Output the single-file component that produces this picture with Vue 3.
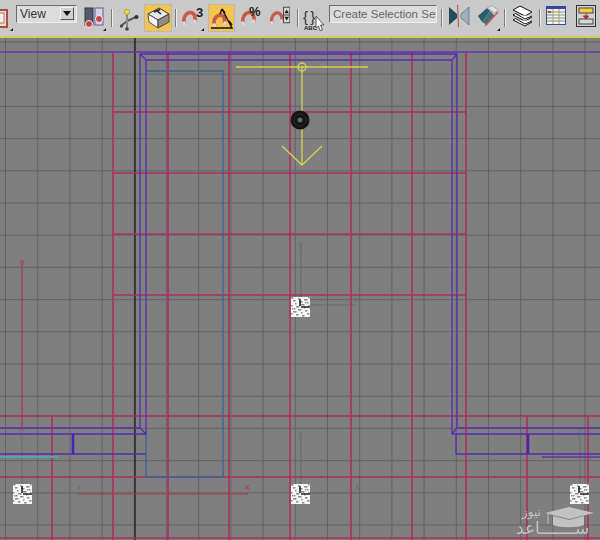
<template>
  <div class="app">
    <div class="toolbar">
      <!-- cut off icon at the left edge -->
      <svg class="ico stub" width="8" height="28" viewBox="0 0 8 28">
        <rect x="-4" y="6" width="11" height="17" fill="#e8e0dc" stroke="#a8503c" stroke-width="2" />
        <rect x="-4" y="9" width="8" height="10" fill="#f4f2ee" stroke="#c06a58" />
      </svg>

      <div class="combo view">
        <span>View</span>
        <i class="arrow"></i>
      </div>
      <i class="corner c-view"></i>

      <svg class="ico pair" width="22" height="28" viewBox="0 0 22 28">
        <rect x="2" y="4" width="8" height="17" fill="#55596a" stroke="#33364a" />
        <circle cx="6" cy="20" r="3.5" fill="#c8404a" stroke="#efefef" />
        <rect x="12" y="4" width="8" height="17" fill="#cfd3e4" stroke="#5a6490" />
        <circle cx="16" cy="15" r="3.5" fill="#c8404a" stroke="#efefef" />
      </svg>
      <i class="corner c-pair"></i>
      <i class="sep s1"></i>

      <svg class="ico axis" width="20" height="28" viewBox="0 0 20 28">
        <path d="M7 11V24M7 17L16 13M7 17L1 22" stroke="#5a5a5a" stroke-width="2" fill="none" />
        <path d="M7 11V24" stroke="#e8e8e8" stroke-width="0.7" />
        <circle cx="7" cy="8" r="2.6" fill="#e8dc40" stroke="#8a8420" stroke-width="0.6" />
        <circle cx="16.5" cy="13" r="2" fill="#333" />
        <circle cx="1.5" cy="22" r="1.6" fill="#444" />
        <circle cx="7" cy="25" r="1.8" fill="#444" />
      </svg>

      <div class="toggle box-btn">
        <svg width="24" height="24" viewBox="0 0 24 24">
          <path d="M2 8L13 2L23 8L12 14Z" fill="#e6e6e6" stroke="#333" />
          <path d="M2 8L12 14V22L3 16Z" fill="#f4f4f4" stroke="#555" />
          <path d="M12 14L23 8V16L12 22Z" fill="#8d8d8d" stroke="#444" />
          <path d="M8 6L14 3.6M11 4.8L15 8" stroke="#222" stroke-width="1.6" fill="none" />
        </svg>
      </div>
      <i class="sep s2"></i>

      <div class="snap m3">
        <svg width="16" height="18" viewBox="0 0 16 18">
          <path class="mag" d="M3.5 15C1 8 6 3 10 3.5C13 4 15 8 13.5 12.5" />
          <path class="mag-tip" d="M2.4 12.5L3.8 16.2M12 11.6L14.8 12.8" />
        </svg>
        <b class="three">3</b>
      </div>
      <i class="corner c-snap"></i>

      <div class="toggle ang-btn">
        <svg width="25" height="24" viewBox="0 0 25 24">
          <path class="mag" d="M6 20C3 13 8 9 12 9C15 10 17 13 15 18" />
          <path class="mag-tip" d="M4.6 17.5L6 21M14.5 16.5L17 18" />
          <path d="M2 22H23L13 3" fill="none" stroke="#111" stroke-width="1.4" />
          <path d="M13 3L11 8M13 3L16 7M20 15L23 19" stroke="#111" stroke-width="1.4" fill="none" />
        </svg>
      </div>

      <div class="snap mp">
        <svg width="16" height="18" viewBox="0 0 16 18">
          <path class="mag" d="M3.5 15C1 8 6 3 10 3.5C13 4 15 8 13.5 12.5" />
          <path class="mag-tip" d="M2.4 12.5L3.8 16.2M12 11.6L14.8 12.8" />
        </svg>
        <b class="pct">%</b>
      </div>

      <div class="snap ms">
        <svg width="16" height="18" viewBox="0 0 16 18">
          <path class="mag" d="M3.5 15C1 8 6 3 10 3.5C13 4 15 8 13.5 12.5" />
          <path class="mag-tip" d="M2.4 12.5L3.8 16.2M12 11.6L14.8 12.8" />
        </svg>
        <svg class="spin" width="8" height="18" viewBox="0 0 8 18">
          <rect x="0.5" y="0.5" width="7" height="17" fill="#d4d4d4" stroke="#444" />
          <path d="M4 3L1.5 7H6.5ZM4 15L1.5 11H6.5Z" fill="#222" />
          <path d="M0 9H8" stroke="#444" />
        </svg>
      </div>
      <i class="sep s3"></i>

      <div class="named">
        <span class="brace">{ }</span>
        <span class="abc">ABC</span>
        <svg class="cursor" width="10" height="16" viewBox="0 0 10 16">
          <path d="M1 1L9 10H5.5L7.5 15L5 15.5L3.5 11L1 13Z" fill="#fff" stroke="#555" />
        </svg>
      </div>

      <div class="combo sets">
        <span>Create Selection Set</span>
        <i class="arrow"></i>
      </div>
      <i class="sep s4"></i>

      <svg class="ico mirror" width="22" height="22" viewBox="0 0 22 22">
        <path d="M1 2L9 9V13L1 20Z" fill="#234a5c" />
        <path d="M21 2L13 9V13L21 20Z" fill="#9fb0bc" stroke="#4a6070" stroke-width="0.6" />
        <path d="M9.5 0L10.5 22" stroke="#c86058" stroke-width="1.2" />
      </svg>

      <svg class="ico align" width="22" height="24" viewBox="0 0 22 24">
        <path d="M1 11L10 3L13 6L5 17Z" fill="#2c5c6c" />
        <path d="M5 17L13 6L18 11L10 20Z" fill="#40707e" />
        <path d="M10 3L15 0.6L21 5L18 8Z" fill="#e0e0e0" stroke="#888" stroke-width="0.6" />
        <path d="M8 21L21 7" stroke="#c85a50" stroke-width="1.4" />
      </svg>
      <i class="corner c-align"></i>
      <i class="sep s5"></i>

      <svg class="ico layers" width="21" height="22" viewBox="0 0 21 22">
        <path d="M1 5L8 1L20 7L13 11Z" fill="#fff" stroke="#111" />
        <path d="M1 10L3.5 8.5L13 14L20 11M1 10L13 16L20 12" fill="#fff" stroke="#111" />
        <path d="M1 15L13 21L20 17M1 15L3.5 13.5L13 19L20 16" fill="#fff" stroke="#111" />
      </svg>
      <i class="sep s6"></i>

      <svg class="ico table" width="20" height="20" viewBox="0 0 20 20">
        <rect x="0.5" y="0.5" width="19" height="18" fill="#f2f2ee" stroke="#3a4a90" />
        <rect x="0" y="0" width="20" height="3" fill="#3444a0" />
        <path d="M1 6H19M1 9H19M1 12H19M1 15H19" stroke="#7f9a70" />
        <path d="M7 3V18M13 3V18" stroke="#b09a60" />
        <rect x="2" y="5" width="3" height="2" fill="#c04040" />
      </svg>

      <svg class="ico schematic" width="20" height="22" viewBox="0 0 20 22">
        <rect x="0.5" y="0.5" width="19" height="21" fill="#d0d0d0" stroke="#333" />
        <rect x="3" y="3" width="14" height="5" fill="#f0d040" stroke="#444" />
        <rect x="3" y="14" width="14" height="5" fill="#d8d8d8" stroke="#444" />
        <path d="M10 8V13M7.5 11L10 14L12.5 11Z" stroke="#b02828" fill="#b02828" />
      </svg>
    </div>
    <div class="accent"></div>

    <svg class="view-canvas" width="600" height="502" viewBox="0 38 600 502">
      <rect x="0" y="38" width="600" height="502" fill="#7f7f7f" />

      <!-- home grid -->
      <path v-for="x in gridX" :key="'gx' + x" :d="`M${x} 38V540`" class="grid" />
      <path v-for="y in gridY" :key="'gy' + y" :d="`M0 ${y}H600`" class="grid" />
      <path d="M135 38V540" class="world" />

      <!-- axes of the three lower pivots and the centre one -->
      <path d="M301 245V305H356M301 436V493H356M22 436V493H78M580 436V493" class="faint" />
      <text x="298" y="247" class="faint-t">y</text>
      <text x="298" y="436" class="faint-t">y</text>
      <text x="354" y="302" class="faint-t">x</text>
      <text x="355" y="490" class="faint-t">x</text>
      <text x="77" y="490" class="faint-t">x</text>
      <text x="577" y="434" class="faint-t">y</text>
      <text x="19" y="434" class="faint-t">y</text>

      <!-- walls -->
      <path v-for="l in redLines" :key="l" :d="l" class="red" />
      <path d="M22 268V430M78 494H248" class="axis-red" />
      <text x="20" y="265" class="red-t">y</text>
      <text x="245" y="490" class="red-t">x</text>

      <path d="M0 52H600" class="purple thick" />
      <path d="M146 71H223V477H146V434" class="blue" />
      <path
        d="M0 428H140V54H457V428H600M0 434H146V60H452V434H600M140 54L146 60M457 54L452 60M140 428L146 434M457 428L452 434M0 454H146M456 434V454H600"
        class="purple"
      />
      <path d="M73 434V454M528 434V454" class="purple bar" />
      <path d="M0 457H58" class="teal" />
      <path d="M542 457H600" class="purple thick" />

      <!-- target camera -->
      <path d="M236 67H368M302 67V165M282 146L302 165L322 146" class="yellow" />
      <circle cx="302" cy="67" r="4" class="yellow" />
      <circle cx="300" cy="120" r="9.5" fill="#141414" />
      <circle cx="300" cy="120" r="6" fill="none" stroke="#444" stroke-dasharray="1 1" />
      <circle cx="300" cy="120" r="2.5" fill="#6a6a52" />

      <!-- pivots -->
      <g v-for="p in pivots" :key="p.x + '-' + p.y">
        <rect :x="p.x" :y="p.y" width="19" height="20" fill="#f6f6f6" />
        <rect v-for="d in specks" :key="d.k" :x="p.x + d.x" :y="p.y + d.y" width="1.5" height="1.5" fill="#8d8d8d" />
        <path :d="`M${p.x + 9} ${p.y + 2}V${p.y + 9}M${p.x + 10} ${p.y + 10}H${p.x + 19}`" stroke="#222" stroke-width="1.6" />
      </g>

      <!-- watermark -->
      <g class="mark">
        <path d="M545 513L569 507L594 513L569 519Z" />
        <path d="M553 516V525C560 528 577 528 584 525V516L569 520Z" />
        <path d="M548 514V524" stroke="#c2c2c2" stroke-width="1" />
        <text x="522" y="516" class="mark-small">نیوز</text>
        <text x="516" y="534" class="mark-big">ســـــــاعد</text>
      </g>
    </svg>
  </div>
</template>

<script setup>
const gridX = []
for (let k = 0; k < 19; k++) gridX.push(+(5.5 + 32.2 * k).toFixed(1))

const gridY = []
for (let k = 0; k < 16; k++) gridY.push(+(525 - 32.2 * k).toFixed(1))

const redLines = [
  ...[113, 168, 229, 290, 351, 412, 466].map((x) => `M${x} 52V540`),
  ...[112, 173, 234, 295].map((y) => `M113 ${y}H466`),
  ...[416, 477, 538].map((y) => `M0 ${y}H600`),
  'M52 416V540',
  'M527 416V540',
  'M588 416V540',
]

const pivots = [
  { x: 291, y: 297 },
  { x: 13, y: 484 },
  { x: 291, y: 484 },
  { x: 570, y: 484 },
]

// fixed scatter so that the pivot icons look dithered
const specks = []
for (let i = 0; i < 42; i++) {
  specks.push({ k: i, x: (i * 7) % 18, y: (i * 11 + (i % 3)) % 19 })
}
</script>

<style>
html, body { margin: 0; background: #7f7f7f; }
</style>

<style scoped>
.app { width: 600px; height: 540px; overflow: hidden; font-family: "Liberation Sans", Arial, sans-serif; }
.toolbar { position: relative; display: flex; align-items: center; height: 36px; background: #c9c9c9; box-sizing: border-box; padding-bottom: 1px; }
.accent { height: 2px; background: #d8cc50; }
.view-canvas { display: block; filter: blur(0.35px); }

.ico { flex: none; }
.combo { flex: none; display: flex; align-items: center; justify-content: space-between; height: 18px; box-sizing: border-box; padding: 0 2px 0 3px; background: #dcdcdc; border: 1px solid; border-color: #6c6c6c #eeeeee #eeeeee #6c6c6c; margin-bottom: 8px; font-size: 12px; color: #333; }
.view { width: 61px; margin-left: 8px; }
.sets { width: 108px; margin-left: 3px; font-size: 11.5px; color: #666; white-space: nowrap; overflow: hidden; }
.arrow { flex: none; position: relative; width: 14px; height: 13px; background: #d2d2d2; border: 1px solid; border-color: #f4f4f4 #555 #555 #f4f4f4; box-sizing: border-box; }
.arrow::after { content: ""; position: absolute; left: 2px; top: 3px; border: 4px solid transparent; border-top: 5px solid #111; border-bottom: 0; }

.corner { position: absolute; top: 28px; width: 0; height: 0; border-left: 3px solid transparent; border-bottom: 3px solid #222; }
.c-view { left: 10px; }
.c-pair { left: 103px; }
.c-snap { left: 201px; }
.c-align { left: 497px; }

.sep { flex: none; width: 1px; height: 18px; background: #7c7c7c; border-right: 1px solid #ececec; }
.s1 { margin-left: 6px; }
.s2 { margin-left: 3px; }
.s3 { margin-left: 7px; }
.s4 { margin-left: 4px; }
.s5 { margin-left: 5px; }
.s6 { margin-left: 6px; }

.pair { margin-left: 6px; }
.axis { margin-left: 7px; }
.toggle { flex: none; display: flex; align-items: center; justify-content: center; height: 28px; background: #f4c44e; box-sizing: border-box; border: 1px solid #b8b8b8; }
.box-btn { width: 28px; margin-left: 4px; }
.ang-btn { width: 27px; margin-left: 1px; }

.snap { flex: none; position: relative; display: flex; align-items: center; height: 28px; }
.m3 { width: 26px; margin-left: 4px; }
.mp { width: 22px; margin-left: 5px; }
.ms { width: 21px; margin-left: 7px; gap: 0; }
.mag { fill: none; stroke: #c85a48; stroke-width: 3.6; }
.mag-tip { fill: none; stroke: #d8d8d8; stroke-width: 3.4; }
.three { position: absolute; left: 15px; top: 1px; font-size: 13px; color: #222; }
.pct { position: absolute; left: 9px; top: 0; font-size: 13px; color: #222; }
.spin { margin-left: -1px; margin-bottom: 6px; }

.named { flex: none; position: relative; width: 24px; height: 28px; margin-left: 3px; }
.brace { position: absolute; left: 1px; top: 4px; font-size: 15px; letter-spacing: -1px; color: #333; white-space: nowrap; }
.abc { position: absolute; left: 2px; top: 21px; font-size: 6px; font-weight: 700; color: #222; }
.cursor { position: absolute; left: 13px; top: 11px; }

.mirror { margin-left: 5px; margin-bottom: 4px; }
.align { margin-left: 7px; margin-bottom: 2px; }
.layers { margin-left: 6px; margin-bottom: 3px; }
.table { margin-left: 5px; margin-bottom: 3px; }
.schematic { margin-left: 10px; margin-bottom: 3px; }

.grid { stroke: #646464; stroke-width: 1; fill: none; }
.world { stroke: #111; stroke-width: 1.2; fill: none; }
.faint { stroke: #6d6d6d; stroke-width: 1.2; fill: none; }
.faint-t { fill: #6e6e6e; font-size: 9px; font-family: "Liberation Sans", Arial, sans-serif; }
.red { stroke: #ad2f60; stroke-width: 1.6; fill: none; }
.axis-red { stroke: #b0384a; stroke-width: 1.2; fill: none; }
.red-t { fill: #bb3040; font-size: 9px; font-family: "Liberation Sans", Arial, sans-serif; }
.purple { stroke: #5a2cb0; stroke-width: 1.3; fill: none; }
.thick { stroke: #6a30a8; stroke-width: 1.6; }
.bar { stroke-width: 2.6; stroke: #4c22b8; }
.blue { stroke: #3a6596; stroke-width: 1.3; fill: none; }
.teal { stroke: #52a8a0; stroke-width: 2; fill: none; }
.yellow { stroke: #d8d050; stroke-width: 1.3; fill: none; }
.mark { fill: #c2c2c2; }
.mark-small { font-size: 12px; font-family: "DejaVu Sans", sans-serif; }
.mark-big { font-size: 17px; font-family: "DejaVu Sans", sans-serif; }
</style>
